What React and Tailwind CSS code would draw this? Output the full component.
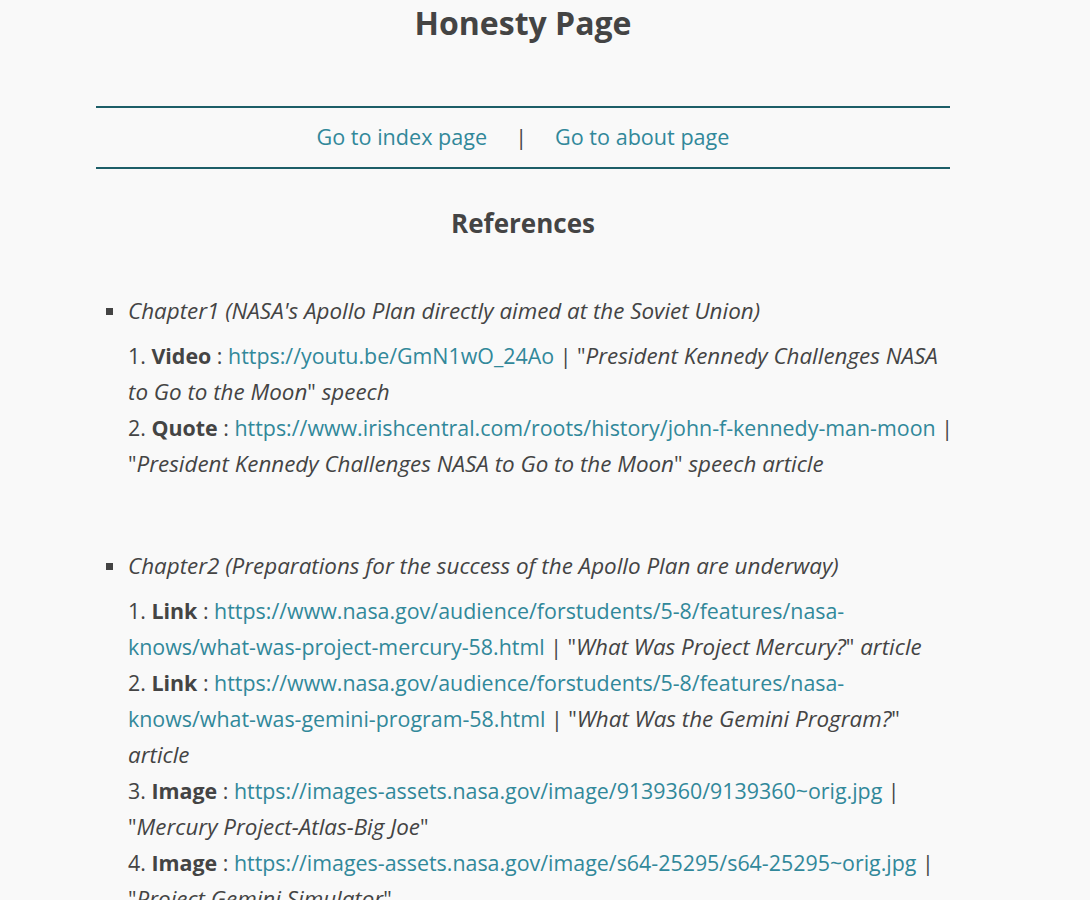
const chapters = [
  {
    title: "Chapter1 (NASA's Apollo Plan directly aimed at the Soviet Union)",
    items: [
      {
        kind: "Video",
        url: "https://youtu.be/GmN1wO_24Ao",
        title: "President Kennedy Challenges NASA to Go to the Moon",
        tail: "speech",
      },
      {
        kind: "Quote",
        url: "https://www.irishcentral.com/roots/history/john-f-kennedy-man-moon",
        title: "President Kennedy Challenges NASA to Go to the Moon",
        tail: "speech article",
      },
    ],
  },
  {
    title: "Chapter2 (Preparations for the success of the Apollo Plan are underway)",
    items: [
      {
        kind: "Link",
        url: "https://www.nasa.gov/audience/forstudents/5-8/features/nasa-knows/what-was-project-mercury-58.html",
        title: "What Was Project Mercury?",
        tail: "article",
      },
      {
        kind: "Link",
        url: "https://www.nasa.gov/audience/forstudents/5-8/features/nasa-knows/what-was-gemini-program-58.html",
        title: "What Was the Gemini Program?",
        tail: "article",
      },
      {
        kind: "Image",
        url: "https://images-assets.nasa.gov/image/9139360/9139360~orig.jpg",
        title: "Mercury Project-Atlas-Big Joe",
        tail: "",
      },
      {
        kind: "Image",
        url: "https://images-assets.nasa.gov/image/s64-25295/s64-25295~orig.jpg",
        title: "Project Gemini Simulator",
        tail: "",
      },
    ],
  },
];

export default function App() {
  return (
    <div className="min-h-[900px] bg-[#f9f9f9] text-[#444444] font-['Open_Sans',sans-serif]">
      <div className="ml-[96px] w-[854px]">
        <h1 className="pt-[2px] text-center text-[32px] font-bold leading-[42px]">Honesty Page</h1>

        <nav className="mt-[62px] flex h-[63px] items-center justify-center border-y-2 border-[#1d5e68] text-[21.6px]">
          <a href="#" className="text-[#31889a]">Go to index page</a>
          <span className="mx-[28px] text-[#444444]">|</span>
          <a href="#" className="text-[#31889a]">Go to about page</a>
        </nav>

        <h2 className="mt-[36px] text-center text-[26px] font-bold leading-[36px]">References</h2>

        <ul className="mt-[52px] mr-[-10px] pl-[32px] text-[21.4px] leading-[36px]">
          {chapters.map((chapter, ci) => (
            <li key={ci} className={ci > 0 ? "mt-[66px]" : ""}>
              <div className="relative text-[22.4px] italic">
                <span className="absolute left-[-22px] top-[15px] h-[7px] w-[7px] bg-[#444444]" />
                {chapter.title}
              </div>
              <ol className="mt-[9px]">
                {chapter.items.map((item, i) => (
                  <li key={i} className="break-words">
                    {i + 1}. <b>{item.kind}</b> :{" "}
                    <a href="#" className="text-[#31889a]">{item.url}</a> | "
                    <i className="text-[22.4px]">{item.title}</i>"
                    {item.tail ? <i className="text-[22.4px]">{" " + item.tail}</i> : null}
                  </li>
                ))}
              </ol>
            </li>
          ))}
        </ul>
      </div>
    </div>
  );
}
